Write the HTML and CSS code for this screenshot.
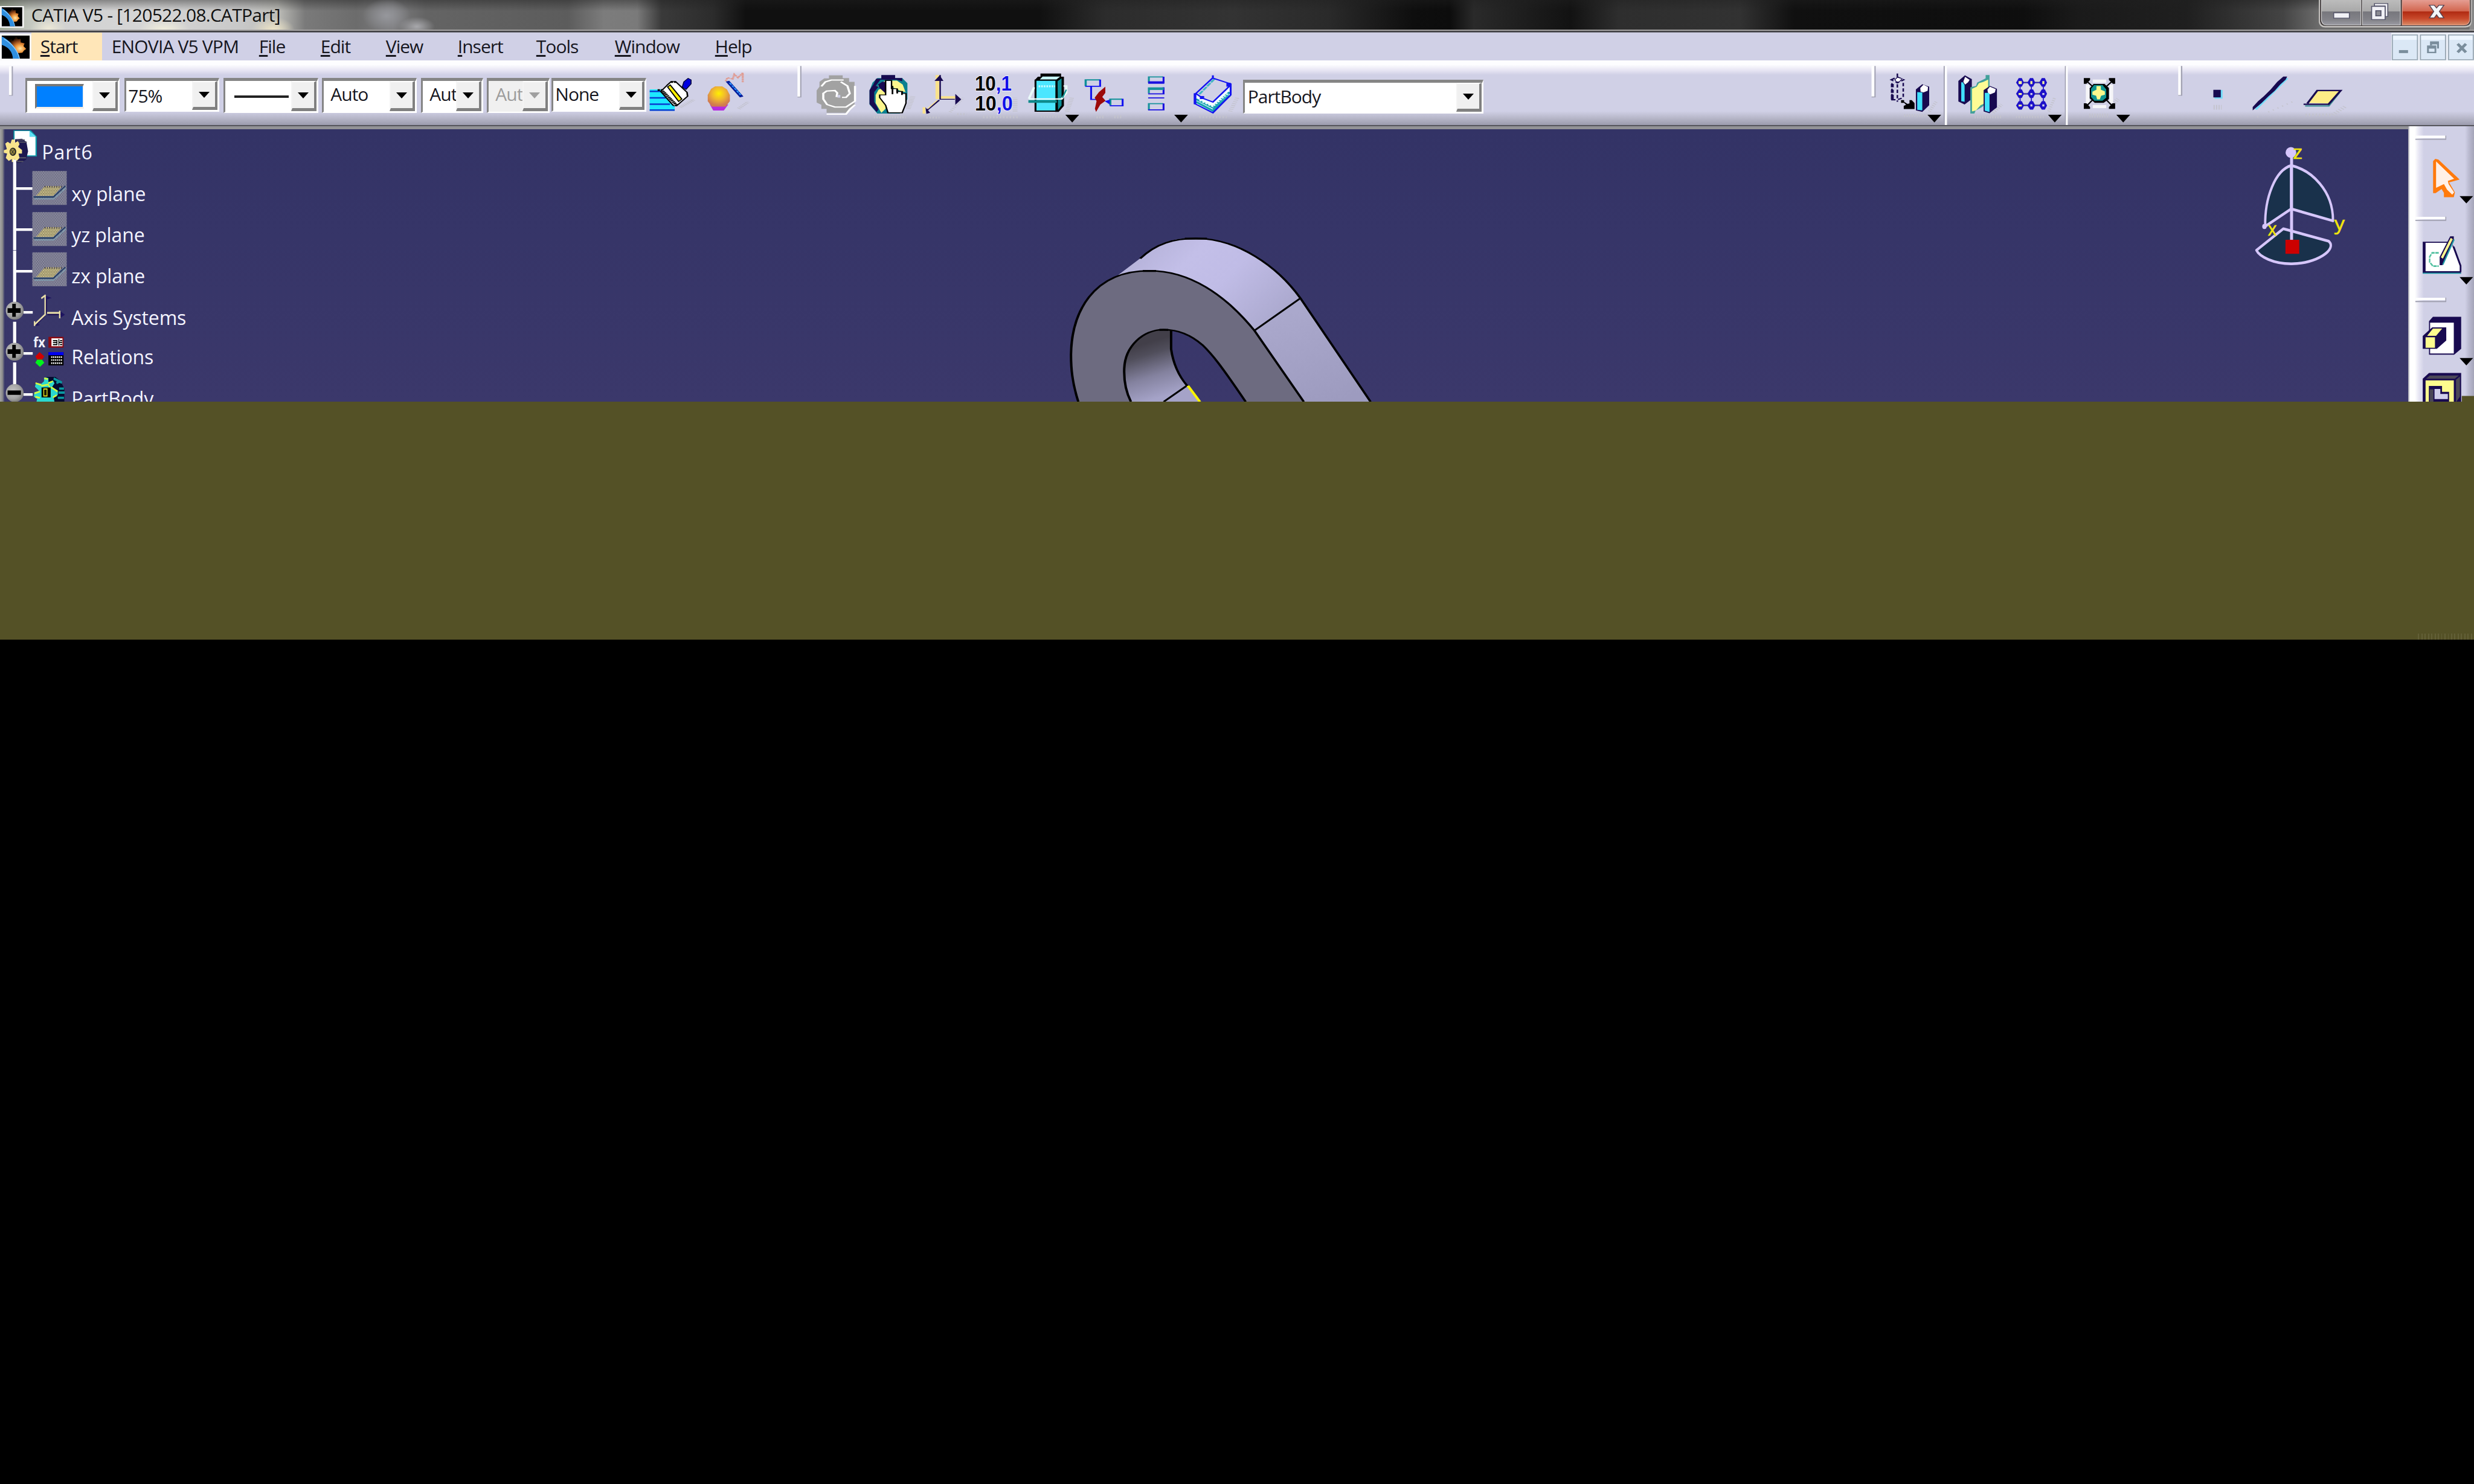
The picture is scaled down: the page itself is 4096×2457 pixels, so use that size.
FILE: index.html
```html
<!DOCTYPE html>
<html lang="en">
<head>
<meta charset="utf-8">
<title>CATIA V5 - [120522.08.CATPart]</title>
<link rel="stylesheet" href="styles.css">
</head>
<body>
<svg class="defs" width="0" height="0">
  <defs>
    <radialGradient id="glow" gradientUnits="userSpaceOnUse" cx="66" cy="56" r="46"><stop offset="0" stop-color="#ffe9a8"/><stop offset=".35" stop-color="#f0983e"/><stop offset=".7" stop-color="#8a4216"/><stop offset="1" stop-color="#1c0c04"/></radialGradient>
    <radialGradient id="ball" cx=".5" cy=".35" r=".6"><stop offset="0" stop-color="#fff000"/><stop offset=".5" stop-color="#f0b830"/><stop offset="1" stop-color="#d07a50"/></radialGradient>
    <radialGradient id="knob" cx=".4" cy=".4" r=".6"><stop offset="0" stop-color="#c4c4c4"/><stop offset=".7" stop-color="#a2a2a2"/><stop offset="1" stop-color="#808080"/></radialGradient>
    <pattern id="dither" width="12" height="16" patternUnits="userSpaceOnUse"><rect width="12" height="16" fill="#55556f"/><rect width="6" height="8" fill="#a4a4b4"/><rect x="6" y="8" width="6" height="8" fill="#a4a4b4"/></pattern>
    <pattern id="ditherGold" width="12" height="16" patternUnits="userSpaceOnUse"><rect width="12" height="16" fill="#6e6848"/><rect width="7" height="8" fill="#e4d8a0"/><rect x="6" y="8" width="7" height="8" fill="#e4d8a0"/></pattern>
    <symbol id="logo" viewBox="0 0 100 100" preserveAspectRatio="none">
      <rect width="100" height="100" fill="#000"/>
      <path d="M26 18L36 16L40 24L52 4L58 16L68 14L68 30L82 34L78 46L88 58L80 64L74 74L60 76L52 68L38 50L24 34Z" fill="url(#glow)"/>
      <path d="M0 4C30 20 58 60 64 100H40C40 72 24 48 0 40Z" fill="#2f8fe0"/>
      <path d="M8 14C34 32 58 64 64 100" fill="none" stroke="#8fd0ff" stroke-width="3"/>
    </symbol>
    <symbol id="plane" viewBox="230 255 260 190" preserveAspectRatio="none">
      <rect x="235" y="257" width="250" height="184" fill="url(#dither)"/>
      <path d="M262 392L325 338H452L388 392Z" fill="url(#ditherGold)"/>
      <path d="M244 398H388L475 338" fill="none" stroke="#1f3f66" stroke-width="7"/>
      <path d="M250 408H392L480 348" fill="none" stroke="#7fa2b4" stroke-width="5"/>
      <path d="M325 342H450" stroke="#2b2748" stroke-width="9" stroke-dasharray="5 12"/>
    </symbol>
  </defs>
</svg>

<div class="window">
  <header class="titlebar">
    <svg class="title-icon" viewBox="0 0 132 216" preserveAspectRatio="none"><rect x="0" y="44" width="101" height="158" fill="#f4f4f4"/><use href="#logo" x="7" y="53" width="87" height="139"/></svg>
    <h1 class="title-text">CATIA V5 - [120522.08.CATPart]</h1>
    <svg class="controls" viewBox="575 0 993 216" preserveAspectRatio="none">
      <defs>
        <linearGradient id="btnGrey" x2="0" y2="1"><stop offset="0" stop-color="#bdbdbd"/><stop offset=".46" stop-color="#a9a9a9"/><stop offset=".48" stop-color="#77777d"/><stop offset=".8" stop-color="#838389"/><stop offset="1" stop-color="#9c9ca4"/></linearGradient>
        <linearGradient id="btnRed" x2="0" y2="1"><stop offset="0" stop-color="#e6a096"/><stop offset=".46" stop-color="#d2664f"/><stop offset=".48" stop-color="#b02a12"/><stop offset=".75" stop-color="#c8492b"/><stop offset="1" stop-color="#d98a66"/></linearGradient>
      </defs>
      <rect x="1540" width="28" height="216" fill="#8a8a8a"/>
      <path d="M579 -5V160Q584 200 620 200H1515Q1552 198 1554 160V-5Z" fill="#c4c2bf"/>
      <path d="M587 -5V155Q592 189 622 189H1510Q1546 187 1548 155V-5Z" fill="#3b3536"/>
      <path d="M596 -5V150Q602 182 628 182H847V-5Z" fill="url(#btnGrey)" stroke="#c9c9c9" stroke-width="5"/>
      <path d="M857 -5V182H1099V-5Z" fill="url(#btnGrey)" stroke="#c9c9c9" stroke-width="5"/>
      <path d="M1111 -5V182H1505Q1536 180 1540 150V-5Z" fill="url(#btnRed)" stroke="#e0a392" stroke-width="5"/>
      <rect x="674" y="93" width="100" height="39" fill="#f1f1f6" stroke="#55556a" stroke-width="6"/>
      <path d="M934 44V26H1019V120H1002V44Z" fill="#f1f1f6" stroke="#55556a" stroke-width="6"/>
      <path d="M916 46H1002V142H916Z" fill="#f1f1f6" stroke="#55556a" stroke-width="6"/>
      <rect x="943" y="78" width="32" height="37" fill="#8b8b93" stroke="#55556a" stroke-width="7"/>
      <path d="M1284 38H1316L1330 58L1345 38H1377L1348 83L1377 130H1345L1330 108L1316 130H1284L1312 83Z" fill="#f3f5f8" stroke="#5c4450" stroke-width="6"/>
    </svg>
  </header>

  <nav class="menubar">
    <svg class="menu-icon" viewBox="0 237 132 203" preserveAspectRatio="none"><rect x="0" y="245" width="132" height="195" fill="#f8f8f8"/><use href="#logo" x="7" y="258" width="118" height="170"/></svg>
    <span class="menu start"><u>S</u>tart</span>
    <span class="menu enovia">ENOVIA V5 VPM</span>
    <span class="menu file"><u>F</u>ile</span>
    <span class="menu edit"><u>E</u>dit</span>
    <span class="menu view"><u>V</u>iew</span>
    <span class="menu insert"><u>I</u>nsert</span>
    <span class="menu tools"><u>T</u>ools</span>
    <span class="menu windows"><u>W</u>indow</span>
    <span class="menu help"><u>H</u>elp</span>
    <svg class="mdi" viewBox="1040 235 528 205" preserveAspectRatio="none">
      <rect x="1040" y="237" width="528" height="205" fill="#eef2fa"/>
      <g fill="#dbe8f6" stroke="#98a6b2" stroke-width="7"><rect x="1047" y="252" width="160" height="183"/><rect x="1226" y="252" width="160" height="183"/><rect x="1405" y="252" width="158" height="183"/></g>
      <g fill="#eef6ff"><rect x="1052" y="258" width="150" height="30"/><rect x="1231" y="258" width="150" height="30"/><rect x="1410" y="258" width="148" height="30"/></g>
      <g fill="#7a8d9c"><rect x="1089" y="364" width="58" height="22"/><path d="M1287 300H1344V352H1332V322H1300V330H1287Z"/><path fill-rule="evenodd" d="M1268 330H1327V387H1268ZM1280 353V376H1316V353Z"/></g>
      <path d="M1463 318L1516 380M1516 318L1463 380" stroke="#7a8d9c" stroke-width="19"/>
    </svg>
  </nav>

  <div class="toolbar">
    <svg class="w-grip1" viewBox="0 439 108 470" preserveAspectRatio="none"><rect x="38" y="482" width="12" height="212" fill="#fff"/><path d="M52 482V694H38" fill="none" stroke="#a2a2b2" stroke-width="5"/></svg>
    <div class="combo c1"><span class="swatch"></span><i></i></div>
    <div class="combo c2 short"><span class="value">75%</span><i></i></div>
    <div class="combo c3"><span class="rule"></span><i></i></div>
    <div class="combo c4"><span class="value">Auto</span><i></i></div>
    <div class="combo c5"><span class="value">Aut</span><i></i></div>
    <div class="combo c6 off"><span class="value">Aut</span><i></i></div>
    <div class="combo c7 short"><span class="value">None</span><i></i></div>
    <svg class="w-brush" viewBox="1045 439 205 470" preserveAspectRatio="none">
      <path d="M1175 780L1225 725M1065 850H1165" stroke="#bfbfc8" stroke-width="16" stroke-dasharray="4 5"/>
      <rect x="1058" y="650" width="95" height="155" fill="#1ce8ff"/>
      <path d="M1058 664H1110M1058 711H1120M1058 757H1135M1058 800H1153" stroke="#0a3bd0" stroke-width="11"/>
      <path d="M1182 632L1188 595L1204 570L1215 580V610L1196 650Z" fill="#0000e0" stroke="#000040" stroke-width="4"/>
      <path d="M1124 620L1140 592H1156L1200 672L1202 700L1160 770L1148 768L1100 665Z" fill="#fff" stroke="#000" stroke-width="6"/>
      <path d="M1126 632L1136 618L1180 720L1168 738Z" fill="#ffef00" stroke="#000" stroke-width="5"/>
      <path d="M1088 655H1104L1162 768M1138 597H1158" fill="none" stroke="#000" stroke-width="12" stroke-dasharray="9 3"/>
    </svg>
    <svg class="w-ball" viewBox="1250 439 318 470" preserveAspectRatio="none">
      <path d="M1395 790L1430 740M1285 850H1370" stroke="#bfbfc8" stroke-width="16" stroke-dasharray="4 6"/>
      <path d="M1285 760H1355L1338 804H1298Z" fill="#b52ae0"/>
      <path d="M1277 690L1290 645L1305 628H1332L1350 650L1361 690V735L1345 775H1292L1277 735Z" fill="url(#ball)"/>
      <path d="M1352 590L1406 705" stroke="#001a9a" stroke-width="15"/><path d="M1360 602L1402 690" stroke="#2f9cff" stroke-width="6" stroke-dasharray="16 5"/>
      <path d="M1345 590L1352 565L1372 575L1378 540L1392 565L1410 530V600" fill="none" stroke="#e09a90" stroke-width="8" stroke-dasharray="10 3"/>
    </svg>
    <svg class="w-grip2" viewBox="0 49 120 470" preserveAspectRatio="none"><rect x="57" y="90" width="11" height="225" fill="#fff"/><path d="M71 90V315H57" fill="none" stroke="#a2a2b2" stroke-width="5"/></svg>
    <svg class="w-update" viewBox="120 49 215 470" preserveAspectRatio="none">
      <path d="M190 158H248V178H275V205H298V372L275 400L262 430H180V402H158V372L138 355V268L150 240V205L170 180H190Z" fill="#a2a2a2"/>
      <path d="M158 238L175 205L200 192H252M240 205L268 235L278 290L262 318H245M165 290L180 272L215 268L225 285L222 315M166 285V330L182 370L215 388H262L300 345V235M180 440H262L280 402L300 372" fill="none" stroke="#fff" stroke-width="9"/>
      <path d="M232 300V320" fill="none" stroke="#d0d0e6" stroke-width="12"/>
    </svg>
    <svg class="w-hand" viewBox="335 49 235 470" preserveAspectRatio="none">
      <path d="M380 460H515M525 400L545 310" stroke="#c3c3cc" stroke-width="22" stroke-dasharray="5 6"/>
      <path d="M412 158H470V178H500L522 215V330L490 435H395L362 370V270L375 210L395 178H412Z" fill="#0b7f90"/>
      <path d="M412 156H470V178H500V200L475 190H408L388 235L400 240L382 280V350L400 405L392 425L362 365V265L378 225L390 182H412Z" fill="#180a50"/>
      <path d="M428 196H478L502 225L514 280L490 270L455 240L415 228L394 240ZM400 262L430 240V400L412 430L388 360V300Z" fill="#fbf58c"/>
      <path d="M398 225L415 205H430V290L405 250Z" fill="#180a50"/>
      <path d="M430 195H455V255H478V275H500V290H516V360L500 430H440L430 375L405 320V300H430Z" fill="#fff" stroke="#000" stroke-width="6"/>
      <path d="M459 235V295M479 255V290M499 275V300" stroke="#000" stroke-width="7"/>
    </svg>
    <svg class="w-axis" viewBox="570 49 220 470" preserveAspectRatio="none">
      <path d="M600 465H655M700 425L755 320M730 440H770" stroke="#c3c3cc" stroke-width="14" stroke-dasharray="5 8"/>
      <path d="M647 155V330M656 318H728" stroke="#f9e28c" stroke-width="17"/><path d="M658 155V332H720" fill="none" stroke="#180a50" stroke-width="6"/>
      <path d="M656 158L672 198H634ZM722 293L747 332L722 372Z" fill="#180a50"/>
      <path d="M654 338L600 415" stroke="#180a50" stroke-width="8"/><path d="M646 338L606 400" stroke="#f9e28c" stroke-width="5"/>
      <path d="M584 390H596V436H584Z" fill="#f9e28c"/><path d="M596 390L616 430L600 438Z" fill="#180a50"/>
    </svg>
    <svg class="w-num" viewBox="790 49 220 470" preserveAspectRatio="none">
      <path d="M840 460H990M975 420V320" stroke="#c3c3cc" stroke-width="20" stroke-dasharray="6 8"/>
      <g class="numerals" font-size="158" stroke="#fff" stroke-width="6" paint-order="stroke"><text x="805" y="270" textLength="156" lengthAdjust="spacingAndGlyphs" fill="#000">10<tspan fill="#1010e8">,1</tspan></text><text x="805" y="412" textLength="160" lengthAdjust="spacingAndGlyphs" fill="#000">10<tspan fill="#1010e8">,0</tspan></text></g>
    </svg>
    <svg class="w-cube" viewBox="1010 49 245 470" preserveAspectRatio="none">
      <path d="M1085 455H1180M1195 420L1215 320" stroke="#c3c3cc" stroke-width="20" stroke-dasharray="5 7"/>
      <path d="M1083 145H1170V168H1182V380L1160 424H1145L1060 190L1072 168H1083Z" fill="#000"/>
      <path d="M1080 188L1092 167H1166L1150 188Z" fill="#c8f8ff"/><path d="M1155 200L1172 180V375L1157 410Z" fill="#0b8f98"/>
      <path d="M1062 193H1150V418H1062Z" fill="#4be6ff" stroke="#000" stroke-width="8"/>
      <path d="M1075 237H1145" stroke="#c8fbff" stroke-width="14" stroke-dasharray="7 4"/>
      <path d="M1034 328L1056 245M1180 235H1192V285L1172 330H1034" fill="none" stroke="#eafafa" stroke-width="10"/><path d="M1192 262L1176 320" stroke="#0f8f90" stroke-width="6"/>
      <path d="M1032 338H1152V358H1032Z" fill="#0f8a8c"/>
      <path d="M1188 444H1246L1217 500Z" fill="#000"/>
    </svg>
    <svg class="w-link" viewBox="1255 49 245 470" preserveAspectRatio="none">
      <path d="M1320 460H1350M1395 460H1430" stroke="#c3c3cc" stroke-width="22" stroke-dasharray="5 7"/>
      <path d="M1274 236V191H1335M1378 376V331H1428" fill="none" stroke="#0f9098" stroke-width="9"/>
      <path d="M1335 188V237H1272M1297 240V333H1318M1430 328V379H1376" fill="none" stroke="#1414f0" stroke-width="8"/>
      <path d="M1357 240V285L1344 315L1358 342L1336 370L1318 424L1313 400L1320 345L1312 320L1330 280Z" fill="#9c0a0a"/>
      <path d="M1354 345L1376 335V370Z" fill="#1414f0"/>
    </svg>
    <svg class="w-list" viewBox="106 49 219 470" preserveAspectRatio="none">
      <g fill="none" stroke-width="8"><g stroke="#18929c"><path d="M147 212V169H208M147 288V250H208M147 410V364H208"/></g><g stroke="#1a10e0"><path d="M209 168V215M209 245V292H144M144 322H212M209 362V409H144"/></g></g>
      <rect x="144" y="201" width="68" height="18" fill="#1a10e0"/><rect x="144" y="246" width="66" height="18" fill="#18929c"/>
      <path d="M254 444H312L283 500Z" fill="#000"/>
    </svg>
    <svg class="w-eraser" viewBox="325 49 218 470" preserveAspectRatio="none">
      <path d="M360 460H475M490 420L520 320" stroke="#c3c3cc" stroke-width="18" stroke-dasharray="5 9"/>
      <path d="M342 290L375 325L417 352L490 235V310L417 430L342 365Z" fill="#f2ffff"/>
      <path d="M345 330L417 392L488 280M345 350L417 415L488 305" fill="none" stroke="#15a0b0" stroke-width="12"/>
      <path d="M360 340L417 385L480 290" fill="none" stroke="#eaffff" stroke-width="8" stroke-dasharray="10 6"/>
      <path d="M423 185L360 295" stroke="#42b5c4" stroke-width="10" stroke-dasharray="28 5"/>
      <path d="M417 158V178L492 220L485 240L417 352L375 325L345 290L417 175M342 288V365L417 430L492 300V220" fill="none" stroke="#1414f0" stroke-width="8"/>
      <path d="M362 308H380V330H362ZM474 212H492V240H474ZM336 288H347V368H336Z" fill="#1414f0"/>
    </svg>
    <div class="combo c8"><span class="value">PartBody</span><i></i></div>

    <div class="right-tools">
      <svg class="w-grip3" viewBox="0 49 160 470" preserveAspectRatio="none"><rect x="88" y="90" width="17" height="225" fill="#fff"/><path d="M109 90V315H88" fill="none" stroke="#a2a2b2" stroke-width="7"/></svg>
      <svg class="w-copy" viewBox="160 49 345 470" preserveAspectRatio="none">
        <path d="M280 450H420M430 420L470 350" stroke="#c3c3cc" stroke-width="20" stroke-dasharray="6 9"/>
        <path d="M203 190L240 170L278 190L240 212ZM240 145V350M208 215V335H240L275 320V200" fill="none" stroke="#180a50" stroke-width="9" stroke-dasharray="24 15"/><path d="M210 220V245M210 262V285M210 298V335" stroke="#180a50" stroke-width="17"/>
        <path d="M225 190L240 172L268 182L252 205H235Z" fill="#fff" stroke="#180a50" stroke-width="5"/>
        <path d="M262 338H280V350L300 365L312 362V338H325L342 360V403H278V380L292 372L280 358H262Z" fill="#000"/>
        <path d="M350 260L388 222L429 240V375L388 424L350 412Z" fill="#180a50"/><path d="M358 280L388 282V412L358 408Z" fill="#41e0fa"/><path d="M376 250L395 226L422 242L420 270L395 282L378 276Z" fill="#fff"/>
        <path d="M419 444H500L460 500Z" fill="#000"/>
      </svg>
      <svg class="w-mirror" viewBox="505 49 395 470" preserveAspectRatio="none">
        <path d="M519 90V531" stroke="#9f9fb0" stroke-width="7"/><path d="M529 90V540" stroke="#fff" stroke-width="13"/>
        <path d="M700 460H860M810 430L860 370" stroke="#c3c3cc" stroke-width="22" stroke-dasharray="6 9"/>
        <path d="M603 198L642 158L683 185V330L640 370L603 348Z" fill="#180a50"/><path d="M620 208H640V350L620 345Z" fill="#41e0fa"/><path d="M630 205L642 165L672 190L662 210L642 228Z" fill="#fff" stroke="#180a50" stroke-width="4"/>
        <path d="M674 245L708 235L715 210L765 180V156H788V345L740 390L705 415L698 435H674Z" fill="#42a09a"/>
        <path d="M684 255L712 240L725 215L752 205L780 188V350L735 375L708 412L684 420Z" fill="#fdfb94"/>
        <path d="M753 265L790 235L832 255V390L788 433L753 420Z" fill="#180a50"/><path d="M760 285H788V425L760 415Z" fill="#41e0fa"/><path d="M776 262L790 240L825 258L820 282L792 296L778 282Z" fill="#fff"/>
      </svg>
      <svg class="w-grid" viewBox="900 49 325 470" preserveAspectRatio="none">
        <path d="M945 460H1110M1140 420L1175 320" stroke="#c3c3cc" stroke-width="18" stroke-dasharray="6 10"/>
        <path d="M970 210H1108M970 292H1108M970 376H1108" stroke="#8888a0" stroke-width="14"/><path d="M970 210H1108V376H970ZM1037 210V376M970 292H1108" fill="none" stroke="#1c10c8" stroke-width="6"/>
        <g fill="#1c10c8"><path id="node" d="M962 178H980L993 210L980 240H962L946 210Z"/><use href="#node" x="67"/><use href="#node" x="137"/><use href="#node" y="82"/><use href="#node" x="67" y="82"/><use href="#node" x="137" y="82"/><use href="#node" y="167"/><use href="#node" x="67" y="167"/><use href="#node" x="137" y="167"/></g>
        <g fill="#f7f59a"><path d="M961 199H980V221H961ZM1031 199H1043V221H1031ZM1102 199H1114V221H1102ZM961 286H980V300H961ZM961 371H980V384H961Z"/></g><path d="M1031 286H1043V300H1031ZM1102 286H1114V300H1102ZM1031 369H1043V384H1031ZM1102 369H1114V384H1102Z" fill="#d0d0e6"/>
        <path d="M1136 444H1217L1176 500Z" fill="#000"/>
      </svg>
      <svg class="w-fit" viewBox="1225 49 425 470" preserveAspectRatio="none">
        <path d="M1238 90V531" stroke="#9f9fb0" stroke-width="7"/><path d="M1246 90V540" stroke="#fff" stroke-width="11"/>
        <path d="M1380 450H1490M1510 380L1550 330" stroke="#c3c3cc" stroke-width="28" stroke-dasharray="6 9"/>
        <path d="M1370 225V360M1510 225V360M1400 200H1480M1400 385H1480" stroke="#f5f5f8" stroke-width="22"/>
        <path d="M1362 198L1400 240M1518 198L1480 240M1362 382L1400 335M1518 382L1480 335" stroke="#000" stroke-width="8"/>
        <path d="M1405 220H1470L1496 250V330L1465 358H1412L1382 325V252Z" fill="#000"/><path d="M1408 228H1458L1480 260V320L1458 342H1410L1390 315V255Z" fill="#0f9390"/>
        <path d="M1422 236H1448V262L1472 274V298L1450 306L1442 332H1426L1420 306L1398 298V276L1422 262Z" fill="#fbf98c"/>
        <path d="M1347 178H1384V192L1362 219H1347ZM1496 178H1533V219H1520L1496 192ZM1347 361H1362L1384 388V402H1347ZM1533 361H1518L1496 388V402H1533Z" fill="#000"/>
        <path d="M1540 444H1622L1581 500Z" fill="#000"/>
      </svg>
      <svg class="w-grip4" viewBox="61 49 279 470" preserveAspectRatio="none"><rect x="255" y="90" width="12" height="215" fill="#fff"/><path d="M270 90V303H255" fill="none" stroke="#a2a2b2" stroke-width="6"/></svg>
      <svg class="w-point" viewBox="340 49 180 470" preserveAspectRatio="none"><path d="M412 390H448" stroke="#c3c3cc" stroke-width="34" stroke-dasharray="5 6"/><rect x="416" y="264" width="36" height="63" fill="#6fdcf8"/><rect x="411" y="263" width="33" height="55" fill="#180a50"/></svg>
      <svg class="w-line" viewBox="520 49 270 470" preserveAspectRatio="none"><path d="M605 460H625M655 425L770 345" stroke="#c3c3cc" stroke-width="9" stroke-dasharray="5 20"/><path d="M600 405L740 178" stroke="#6fdcf8" stroke-width="10"/><path d="M586 412V388L610 345L635 310L665 262L695 205L722 166H739L732 190L708 225L684 270L655 312L625 360Z" fill="#180a50"/></svg>
      <svg class="w-plane" viewBox="790 49 778 470" preserveAspectRatio="none"><path d="M820 445H940L1000 380" fill="none" stroke="#c3c3cc" stroke-width="20" stroke-dasharray="5 10"/><path d="M818 380H922L968 285" fill="none" stroke="#3f8f98" stroke-width="10"/><path d="M826 358L870 268H975L925 362Z" fill="#ffec86"/><path d="M828 362L872 268H976L922 368H811" fill="none" stroke="#180a50" stroke-width="10"/></svg>
    </div>
  </div>

  <main class="workspace">
    <section class="viewport">
      <div class="tree">
        <div class="node root"><svg class="root-icon" viewBox="0 30 300 210" preserveAspectRatio="none">
          <path d="M98 36H225L268 70V178H98Z" fill="#0f9aa8"/><path d="M106 40H215V70H258V172H106Z" fill="#fff"/><path d="M215 38L262 70H215Z" fill="#5fe0f5"/>
          <path d="M110 84L160 82L192 98L204 150L190 196L150 212H110Z" fill="#1d1850"/><path d="M120 88H180M130 100H195M120 185H190M120 205H170" stroke="#5a5a66" stroke-width="6"/>
          <path d="M86 86H108V104L130 94L142 110L132 126L160 142V162H135L142 186L122 202L106 192V208H86V192L64 202L42 186L52 162L28 158V144L50 138L38 108L56 98L76 108Z" fill="#f8e48c"/>
          <ellipse cx="94" cy="152" rx="24" ry="22" fill="#222"/><ellipse cx="92" cy="152" rx="17" ry="16" fill="#9c8c3c"/><path d="M82 142L102 164M102 142L82 164" stroke="#333" stroke-width="4"/><rect x="95" y="195" width="23" height="45" fill="#fff"/></svg><span class="label">Part6</span></div>
        <div class="node"><svg class="branch" viewBox="0 240 515 224" preserveAspectRatio="none"><path d="M106.500 240V464" stroke="#fff" stroke-width="23"/><path d="M106 352H238" stroke="#fff" stroke-width="14"/><use href="#plane" x="230" y="255" width="260" height="190"/></svg><span class="label">xy plane</span></div>
        <div class="node"><svg class="branch" viewBox="0 240 515 224" preserveAspectRatio="none"><path d="M106.500 240V464" stroke="#fff" stroke-width="23"/><path d="M106 352H238" stroke="#fff" stroke-width="14"/><use href="#plane" x="230" y="255" width="260" height="190"/></svg><span class="label">yz plane</span></div>
        <div class="node"><svg class="branch" viewBox="0 688 515 224" preserveAspectRatio="none"><path d="M106.500 688V912" stroke="#fff" stroke-width="23"/><path d="M106 800H238" stroke="#fff" stroke-width="14"/><use href="#plane" x="230" y="695" width="260" height="190"/></svg><span class="label">zx plane</span></div>
        <div class="node"><svg class="branch" viewBox="0 912 515 224" preserveAspectRatio="none">
          <path d="M106.500 912V970M106.500 1075V1136" stroke="#fff" stroke-width="23"/><path d="M170 1024H238" stroke="#fff" stroke-width="14"/>
          <ellipse cx="107" cy="1015" rx="65" ry="49" fill="url(#knob)"/><path d="M55 1014H150M102 978V1048" stroke="#000" stroke-width="26"/>
          <path d="M338 945V1030M265 1090L328 1042M345 1036H445" stroke="#180a50" stroke-width="6"/><path d="M318 930L376 946L338 954ZM442 1020L472 1037L442 1052ZM262 1082L290 1092L260 1098Z" fill="#1e1460"/>
          <path d="M328 932V1036L252 1090M300 948L332 930M342 1027H438M434 1015V1056M251 1072V1098" fill="none" stroke="#e9dfa8" stroke-width="10"/></svg><span class="label">Axis Systems</span></div>
        <div class="node relations"><svg class="branch" viewBox="0 1136 515 224" preserveAspectRatio="none">
          <path d="M106.500 1136V1192M106.500 1297V1360" stroke="#fff" stroke-width="23"/><path d="M170 1248H238" stroke="#fff" stroke-width="14"/>
          <ellipse cx="107" cy="1239" rx="65" ry="49" fill="url(#knob)"/><path d="M55 1238H150M102 1202V1272" stroke="#000" stroke-width="26"/>
          <text class="fx" x="243" y="1216" font-size="76" textLength="86" lengthAdjust="spacingAndGlyphs" fill="#f2f2fa">fx</text>
          <rect x="352" y="1158" width="110" height="59" fill="#8a0a12"/><rect x="374" y="1166" width="80" height="43" fill="#fff"/><path d="M385 1178H414V1200H385M385 1188H412M428 1170V1206M430 1188H452M436 1178H452M436 1200H452" fill="none" stroke="#000" stroke-width="6"/>
          <path d="M288 1241L322 1264L306 1282H270L257 1264Z" fill="#d00000"/><path d="M270 1282H306L322 1298L290 1321L257 1298Z" fill="#00f41c"/>
          <rect x="352" y="1241" width="110" height="72" fill="#000"/><rect x="352" y="1241" width="110" height="17" fill="#0000f0"/><path d="M372 1268H454M372 1284H454M372 1301H454" stroke="#fff" stroke-width="8" stroke-dasharray="9 5"/></svg><span class="label">Relations</span></div>
        <div class="node body"><svg class="branch" viewBox="0 1360 515 224" preserveAspectRatio="none">
          <path d="M106.500 1360V1420" stroke="#fff" stroke-width="23"/><path d="M170 1472H238" stroke="#fff" stroke-width="14"/>
          <ellipse cx="107" cy="1464" rx="65" ry="49" fill="url(#knob)"/><path d="M55 1462H152" stroke="#000" stroke-width="24"/>
          <path d="M340 1376H402L440 1398L468 1440V1520H260L330 1390Z" fill="#050c30"/><path d="M390 1385L450 1408M410 1410L440 1400M430 1440H465M425 1462H470M420 1490H465" stroke="#0b97a0" stroke-width="13"/>
          <path d="M320 1380L352 1382L352 1408L386 1396L396 1412L378 1432L420 1450V1476L390 1488L398 1520H262L270 1496L246 1484L250 1460L284 1452L254 1430L262 1408L300 1414L320 1400Z" fill="#2bd8d0"/>
          <path d="M322 1384L348 1388M350 1410L384 1400M372 1432L418 1456M412 1476L384 1488M258 1410L300 1420M250 1466L290 1456M256 1484L290 1490M300 1425L350 1418L368 1440" fill="none" stroke="#d8fb3c" stroke-width="9"/>
          <rect x="302" y="1434" width="66" height="54" fill="#000"/><rect x="318" y="1442" width="24" height="38" fill="#181800" stroke="#e6e620" stroke-width="6"/></svg><span class="label">PartBody</span></div>
      </div>

      <svg class="part" viewBox="80 90 1400 1212" preserveAspectRatio="none">
        <defs>
          <linearGradient id="rim" gradientUnits="userSpaceOnUse" x1="350" y1="250" x2="1080" y2="700"><stop offset="0" stop-color="#b4b1d8"/><stop offset=".3" stop-color="#c3bfe8"/><stop offset=".55" stop-color="#c0bce6"/><stop offset="1" stop-color="#a9a7cc"/></linearGradient>
          <linearGradient id="side" gradientUnits="userSpaceOnUse" x1="1000" y1="700" x2="1300" y2="1300"><stop offset="0" stop-color="#aaa8cc"/><stop offset="1" stop-color="#9d9bbf"/></linearGradient>
          <linearGradient id="bore" gradientUnits="userSpaceOnUse" x1="400" y1="900" x2="570" y2="1240"><stop offset="0" stop-color="#423f49"/><stop offset=".2" stop-color="#504e5b"/><stop offset=".6" stop-color="#84829f"/><stop offset="1" stop-color="#a5a3c8"/></linearGradient>
        </defs>
        <path d="M318 382L420 258C490 150 560 112 670 112C860 112 1040 320 1143 550L935 785C800 520 640 350 460 350Z" fill="url(#rim)"/>
        <path d="M1143 550L935 785L1158 1302H1460Z" fill="url(#side)"/>
        <path fill-rule="evenodd" d="M138 1302C110 1160 105 1060 105 960C108 660 200 350 460 350C640 350 800 520 935 785L1158 1302ZM376 1302C350 1220 344 1140 346 1060C350 900 430 778 525 778C590 778 650 820 700 890C745 960 780 1030 895 1302Z" fill="#6d6b80"/>
        <path d="M376 1302C350 1220 344 1140 346 1060C350 900 430 778 525 778L558 782V920C568 1030 590 1110 630 1185L690 1302Z" fill="url(#bore)"/>
        <g fill="none" stroke="#000" stroke-width="11">
          <path d="M418 262C490 152 570 115 670 115C860 115 1040 320 1143 550L1460 1302"/>
          <path d="M620 117H720M430 352H490M505 780H545" stroke-width="15"/>
          <path d="M138 1302C110 1160 105 1060 105 960C108 660 200 350 460 350C640 350 800 520 935 785L1158 1302"/>
          <path d="M1143 550L935 785M376 1302C350 1220 344 1140 346 1060C350 900 430 778 525 778C590 778 650 820 700 890C745 960 780 1030 895 1302M558 782V920C568 1030 590 1110 630 1185L525 1302"/>
        </g>
        <path d="M634 1186L688 1302" stroke="#f8f400" stroke-width="13"/>
      </svg>

      <svg class="compass" viewBox="150 90 620 670" preserveAspectRatio="none">
        <g fill="#19314b" stroke="#d6c6fb" stroke-width="15" stroke-linejoin="round"><path d="M402 205C300 230 232 380 236 535L402 440Z"/><path d="M402 205C530 230 670 340 668 505L402 440Z"/><path d="M180 665L352 548L640 615C700 660 560 740 400 738C290 738 200 700 180 665Z"/></g>
        <path d="M404 130V610" stroke="#d6c6fb" stroke-width="19"/><ellipse cx="400" cy="134" rx="34" ry="29" fill="#d6c6fb"/><circle cx="231" cy="536" r="14" fill="#d6c6fb"/>
        <rect x="365" y="608" width="88" height="76" fill="#cc0000"/>
        <g class="axis-name" font-size="104" fill="#f2e60c" stroke="#f2e60c" stroke-width="2"><text x="413" y="168" textLength="60" lengthAdjust="spacingAndGlyphs">z</text><text x="252" y="585" textLength="58" lengthAdjust="spacingAndGlyphs">x</text><text x="677" y="556" textLength="66" lengthAdjust="spacingAndGlyphs">y</text></g>
      </svg>
    </section>

    <aside class="side-tools">
      <svg class="h-select" viewBox="1147 -9 421 449" preserveAspectRatio="none">
        <path d="M1195 42H1385V56H1195Z" fill="#fff"/><path d="M1193 62H1387V42" fill="none" stroke="#a2a2b2" stroke-width="6"/>
        <path d="M1306 180L1320 168L1340 172L1475 280L1408 296L1445 350L1438 376H1375V352L1360 332L1322 354H1306Z" fill="#ff7a0c"/><path d="M1325 182L1440 276L1400 288L1405 305L1440 350L1428 362L1395 335L1375 305L1325 325Z" fill="#fff0e6"/>
        <path d="M1475 370H1561L1518 410Z" fill="#000"/></svg>
      <svg class="h-sketch" viewBox="1147 440 421 440" preserveAspectRatio="none">
        <path d="M1195 483H1385V496H1195Z" fill="#fff"/><path d="M1193 502H1387V482" fill="none" stroke="#a2a2b2" stroke-width="6"/>
        <path d="M1240 618H1440V650L1484 745V790H1240Z" fill="#180a50"/><path d="M1258 624H1430V645L1476 750V778H1258Z" fill="#fff"/><path d="M1405 615H1470L1445 655L1425 625Z" fill="#d0d0e6"/><path d="M1438 645L1482 748V782" fill="none" stroke="#180a50" stroke-width="9"/><path d="M1240 789H1484" stroke="#1f9ba6" stroke-width="6"/>
        <path d="M1342 678H1300L1284 700V728L1305 750H1342" fill="none" stroke="#52c0a0" stroke-width="9" stroke-dasharray="22 4"/>
        <path d="M1348 745V700L1415 588H1438V605L1366 745Z" fill="#180a50"/><path d="M1440 605L1368 742" stroke="#1f9ba6" stroke-width="8"/><path d="M1425 600L1362 706" stroke="#fdf58e" stroke-width="15"/>
        <path d="M1475 810H1561L1518 850Z" fill="#000"/></svg>
      <svg class="h-pad" viewBox="1147 880 421 420" preserveAspectRatio="none">
        <path d="M1195 923H1385V936H1195Z" fill="#fff"/><path d="M1193 943H1387V922" fill="none" stroke="#a2a2b2" stroke-width="6"/>
        <path d="M1280 1050L1305 1026H1485V1200L1440 1232H1280Z" fill="#180a50"/><path d="M1287 1058H1438V1225H1287Z" fill="#fff"/>
        <path d="M1240 1130L1300 1083H1390V1155L1330 1200H1240Z" fill="#180a50"/><path d="M1268 1129L1305 1090H1364L1325 1129Z" fill="#fdfb8e"/><path d="M1258 1137H1318V1194H1258Z" fill="#fdfb8e"/>
        <path d="M1475 1250H1561L1518 1290Z" fill="#000"/></svg>
      <svg class="h-pocket" viewBox="1147 1300 421 186" preserveAspectRatio="none">
        <path d="M1240 1362L1280 1331H1485V1490H1240Z" fill="#180a50"/><path d="M1262 1362L1285 1345H1470L1445 1362ZM1452 1368L1477 1350V1460L1452 1490Z" fill="#4b4858"/>
        <path d="M1258 1371H1438V1490H1258Z" fill="#fdfb8e"/><path d="M1279 1402H1363V1434H1408V1490H1279Z" fill="#180a50"/><path d="M1285 1420H1308V1490H1285Z" fill="#4b4858"/><path d="M1315 1418H1352V1445H1400V1473H1315Z" fill="#d0cfeb"/>
        <rect x="1489" y="1456" width="90" height="40" fill="#545126"/></svg>
    </aside>
  </main>

  <div class="band"><span class="speckle"></span></div>
</div>
</body>
</html>
```
FILE: styles.css
```css
* { box-sizing: border-box; }
html, body { margin: 0; background: #000; }
body { width: 4096px; height: 2457px; overflow: hidden; font-family: "Open Sans", "Noto Sans", sans-serif; font-size: 30px; color: #16161e; }
svg { display: block; flex: none; }
.defs { position: absolute; }
.window { width: 4096px; height: 2457px; background: #000; display: flex; flex-direction: column; }

.titlebar {
  height: 54px; flex: none; display: flex; align-items: flex-start;
  background:
    linear-gradient(#0000 49px, #a5a3a3 49px, #a5a3a3 51px, #454548 51px, #39393c 53px, #b8b8c8 54px),
    radial-gradient(ellipse 30px 20px at 80px 48px, #eeead8, #eeead800),
    radial-gradient(ellipse 42px 20px at 272px 50px, #f2efdc, #f2efdc00),
    radial-gradient(ellipse 36px 22px at 452px 50px, #efe6c8, #efe6c800),
    radial-gradient(ellipse 30px 16px at 690px 44px, #a8a8ac, #a8a8ac00),
    radial-gradient(ellipse 40px 28px at 640px 26px, #96979c, #96979c00),
    linear-gradient(#20202070, #20202000 18px),
    linear-gradient(90deg, #a3ae99 0, #c4c8c0 50px, #d2d2d2 110px, #d6d6d6 250px, #c8c8c8 400px, #bdbdb8 460px, #7a7a7a 505px, #6c6c6c 590px, #7c7c7e 650px, #646464 705px, #5c5c5c 940px, #7c7c7c 1000px, #7a7a7a 1055px, #3a3a3a 1095px, #2c2c2c 1180px, #101010 1235px, #101010 1720px, #2c2c2c 1830px, #333 2040px, #2a2a2a 2200px, #0e0e0e 2340px, #0c0c0c 2400px, #2a2a2a 2440px, #121212 2600px, #2e2e2e 2680px, #323232 2880px, #101010 2970px, #0e0e0e 3350px, #1a1a1a 3440px, #1f1f1f 3620px, #444 3780px, #6c6c6c 3840px);
}
.title-icon { width: 51.8px; height: 49.2px; }
.title-text { margin: 0; font-size: 30px; font-weight: 400; line-height: 50px; letter-spacing: -0.75px; white-space: pre; color: #111; }
.controls { width: 257.8px; height: 49.2px; margin-left: auto; }

.menubar { height: 46px; flex: none; display: flex; background: #d0d0e6; }
.menu-icon { width: 51.8px; height: 46px; }
.menu { line-height: 46px; letter-spacing: -1px; white-space: nowrap; flex: none; }
.menu u { text-decoration-thickness: 3px; text-underline-offset: 3px; text-decoration-skip-ink: none; }
.start { width: 117px; padding-left: 15px; margin-right: 16px; background: #ffe6b8; }
.menu.enovia { width: 244px; letter-spacing: -0.85px; }
.file { width: 102px; }
.edit { width: 108px; }
.view { width: 119px; }
.insert { width: 130px; }
.tools { width: 130px; }
.windows { width: 166px; }
.mdi { width: 137.2px; height: 46px; margin-left: auto; }

.toolbar {
  height: 109px; flex: none; display: flex; border-bottom: 2px solid #55555c;
  background: linear-gradient(#fdfdff 0, #fdfdff 7px, #e8e6f4 16px, #d0d0e6 24px, #d0d0e6 84px, #b8b8ca 95px, #9c9cae 107px);
}
.toolbar svg { height: 107px; }
.combo {
  flex: none; height: 58px; margin-top: 29px; display: flex; align-items: stretch; overflow: hidden;
  background: #fff; border: solid; border-width: 5px 2px 2px 3px; border-color: #858585 #fff #fff #858585;
}
.combo.short { height: 56px; }
.combo i {
  width: 42px; flex: none; margin: 0 1px 1px auto; display: flex; align-items: center; justify-content: center;
  background: #f0f0f0; border: solid; border-width: 2px 4px 5px 2px; border-color: #fff #808080 #808080 #f4f4f4;
}
.combo i::before { content: ""; border: solid transparent; border-width: 10px 9px 0; border-top-color: #000; }
.combo .value { flex: 1 1 0; min-width: 0; overflow: hidden; line-height: 44px; letter-spacing: -1px; white-space: nowrap; }
.combo.off { background: #f0f0f0; color: #9c9c9c; }
.combo.off i::before { border-top-color: #a0a0a0; }
.swatch { flex: none; width: 81px; height: 41px; margin: 5px 0 0 13px; background: #0080ff; border: solid; border-width: 4px 2px 3px 3px; border-color: #777 #f4f4f4 #f6efe8 #777; }
.rule { flex: none; width: 90px; height: 4px; margin: 24px 0 0 15px; background: #222; }
.c1 { width: 156px; margin-right: 8px; }
.c2 { width: 157px; margin-right: 7px; }
.c3 { width: 157px; margin-right: 6px; }
.c4 { width: 157px; margin-right: 7px; }
.c5 { width: 103px; margin-right: 6px; }
.c6 { width: 104px; margin-right: 3px; }
.c7 { width: 157px; }
.c8 { width: 398px; height: 56px; }
.c2 .value, .c7 .value { padding-left: 3px; }
.c4 .value, .c5 .value, .c6 .value { padding-left: 11px; }
.c2 .value { line-height: 50px; }
.combo.c8 { margin-top: 32px; }
.c8 .value { padding-left: 5px; line-height: 46px; }

.w-grip1 { width: 42.3px; }
.w-brush { width: 89.3px; }
.w-ball { width: 138.5px; }
.w-grip2 { width: 47.05px; }
.w-update { width: 84.3px; }
.w-hand { width: 92.15px; }
.w-axis, .w-num { width: 86.3px; }
.w-cube, .w-link { width: 96.1px; }
.w-list { width: 85.9px; }
.w-eraser { width: 85.5px; }
.right-tools { display: flex; margin-left: auto; flex: none; }
.w-grip3 { width: 44.6px; }
.w-copy { width: 96.2px; }
.w-mirror { width: 110.1px; }
.w-grid { width: 90.6px; }
.w-fit { width: 118.5px; }
.w-grip4 { width: 104px; }
.w-point { width: 67.1px; }
.w-line { width: 100.7px; }
.w-plane { width: 290.1px; }
.numerals { font-family: "Liberation Sans", sans-serif; font-weight: 700; }

.workspace { height: 456px; flex: none; display: flex; }
.viewport {
  position: relative; flex: 1; overflow: hidden; border-top: 5px solid #929296;
  background: linear-gradient(90deg, #a4a4a4 0, #8c8c8c 4px, #333366 8px, #33336600 9px), linear-gradient(#333366, #3b386b);
}
.tree { width: 360px; color: #f4f4ff; font-size: 32px; }
.node { display: flex; align-items: center; height: 68.3px; }
.node.root { height: 64px; }
.root-icon { width: 68.3px; height: 64px; }
.branch { width: 117.3px; height: 68.3px; }
.label { line-height: 50px; padding-top: 17px; white-space: nowrap; padding-left: 1px; letter-spacing: -0.15px; }
.root .label { padding-top: 12px; padding-left: 1px; letter-spacing: .9px; }
.relations .label, .body .label { padding-top: 12px; }
.part { position: absolute; left: 1764.4px; top: 175.4px; width: 512.3px; height: 276px; }
.compass { position: absolute; left: 3727.7px; top: 25.3px; width: 161px; height: 204.4px; }
.axis-name, .fx { font-family: "Open Sans", sans-serif; }
.fx { font-weight: 700; }

.side-tools {
  width: 109.3px; flex: none; display: flex; flex-direction: column;
  background: linear-gradient(90deg, #9a9aa6 0, #fff 3px, #fff 11px, #e6e5f3 18px, #d0d0e6 26px, #d0d0e6 94px, #bcbcd2 100px, #a4a4b8 109px);
}
.side-tools svg { width: 109.3px; }
.h-select { height: 137px; }
.h-sketch { height: 134.2px; }
.h-pad { height: 128.1px; }
.h-pocket { height: 56.7px; }

.band { height: 394px; flex: none; background: #545126; display: flex; align-items: flex-end; justify-content: flex-end; }
.speckle { width: 96px; height: 10px; background: repeating-linear-gradient(90deg, #54512600 0 3px, #77745066 3px 5px, #54512600 5px 5.5px); }
```
